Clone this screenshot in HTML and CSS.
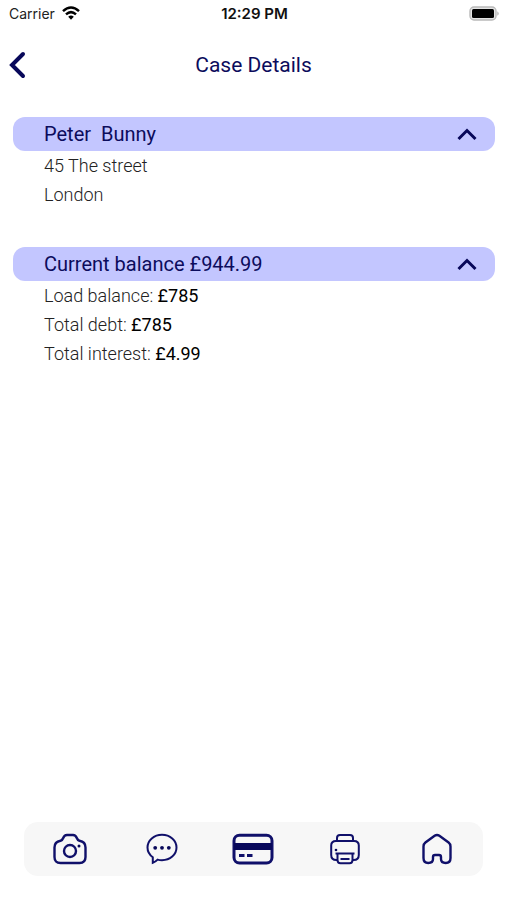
FILE: index.html
```html
<!DOCTYPE html>
<html lang="en">
<head>
  <meta charset="utf-8">
  <meta name="viewport" content="width=device-width, initial-scale=1">
  <title>Case Details</title>
  <link rel="stylesheet" href="styles.css">
</head>
<body>
  <div class="status">
    <div class="carrier">
      <span>Carrier</span>
      <svg width="18" height="14" viewBox="0 0 18 14" aria-hidden="true">
        <g fill="none" stroke="#000" stroke-width="2.5">
          <path d="M1 5.2Q9-2.2 17 5.2"/>
          <path d="M4 8.4Q9 3.9 14 8.4"/>
        </g>
        <path d="M6.2 10.7Q9 8.4 11.8 10.7L9 13.8Z"/>
      </svg>
    </div>
    <span class="time">12:29 PM</span>
    <svg class="battery" width="31" height="15" viewBox="0 0 31 15" aria-hidden="true">
      <rect x="1" y="1" width="26" height="13" rx="4" fill="#e4e4e4" stroke="#b9b9b9" stroke-width="1.4"/>
      <rect x="3" y="3" width="22" height="9" rx="1.5"/>
      <path d="M28.4 5.2Q31 7.5 28.4 9.8Z" fill="#aaa"/>
    </svg>
  </div>

  <header class="header">
    <button class="back" type="button" aria-label="Back">
      <svg width="18" height="28" viewBox="0 0 18 28" aria-hidden="true"><path d="M15 3L4 14L15 25"/></svg>
    </button>
    <h1>Case Details</h1>
  </header>

  <main class="content">
    <section>
      <button class="bar" type="button" aria-expanded="true" aria-controls="person">
        <span>Peter&nbsp; Bunny</span>
        <svg width="20" height="14" viewBox="0 0 20 14" aria-hidden="true"><path d="M1.500 12L10 3.500L18.500 12"/></svg>
      </button>
      <div class="lines" id="person">
        <p>45 The street</p>
        <p>London</p>
      </div>
    </section>
    <section>
      <button class="bar" type="button" aria-expanded="true" aria-controls="balance">
        <span>Current balance £944.99</span>
        <svg width="20" height="14" viewBox="0 0 20 14" aria-hidden="true"><path d="M1.500 12L10 3.500L18.500 12"/></svg>
      </button>
      <div class="lines" id="balance">
        <p>Load balance: <b>£785</b></p>
        <p>Total debt: <b>£785</b></p>
        <p>Total interest: <b>£4.99</b></p>
      </div>
    </section>
  </main>

  <nav class="tabs">
    <a href="#camera" aria-label="Camera">
      <svg width="34" height="32" viewBox="0 0 34 32" aria-hidden="true">
        <path d="M7.500 7.800Q9.400 7.200 10.200 5Q11.300 2 14 2H20Q22.700 2 23.800 5Q24.600 7.200 26.500 7.800Q32.500 8.800 32.500 14.500V24Q32.500 30 26.500 30H7.500Q1.500 30 1.500 24V14.500Q1.500 8.800 7.500 7.800Z"/>
        <circle cx="17" cy="18" r="6"/>
        <circle class="dot" cx="26" cy="13" r="1.500"/>
      </svg>
    </a>
    <a href="#messages" aria-label="Messages">
      <svg class="thin" width="32" height="32" viewBox="0 0 32 32" aria-hidden="true">
        <path d="M6.800 24.200C3.400 21.800 1.500 18.400 1.500 14.500C1.500 7.200 8 1.800 16 1.800S30.500 7.200 30.500 14.500S24 27.200 16 27.200C14.500 27.200 13 27 11.600 26.600C10 28.300 8.600 29.200 6.800 29.800Z"/>
        <circle class="dot" cx="9.200" cy="14.800" r="1.900"/>
        <circle class="dot" cx="16" cy="14.800" r="1.900"/>
        <circle class="dot" cx="22.800" cy="14.800" r="1.900"/>
      </svg>
    </a>
    <a href="#payments" aria-label="Payments">
      <svg class="thick" width="42" height="32" viewBox="0 0 42 32" aria-hidden="true">
        <rect x="2" y="2.200" width="38" height="27.800" rx="5.500"/>
        <path class="dot" d="M2 10H40V17H2Z"/>
        <path d="M7 22.500H12.500M15 22.500H20.500"/>
      </svg>
    </a>
    <a href="#documents" aria-label="Documents">
      <svg class="thin" width="30" height="32" viewBox="0 0 30 32" aria-hidden="true">
        <path d="M7 8V5Q7 2 10 2H20Q23 2 23 5V8"/>
        <path d="M7.500 27H6.500Q1.200 27 1.200 22V12.500Q1.200 8 6 8H24Q28.800 8 28.800 12.500V22Q28.800 27 23.500 27H22.500"/>
        <path d="M5.500 20.500H24.500M7.500 20.500V27Q7.500 30.200 10.500 30.200H19.500Q22.500 30.200 22.500 27V20.500M10.500 26H19.500"/>
        <circle class="dot" cx="6" cy="17" r="1.300"/>
      </svg>
    </a>
    <a href="#home" aria-label="Home">
      <svg width="30" height="32" viewBox="0 0 30 32" aria-hidden="true">
        <path d="M1.500 13.500Q1.500 11 3.400 9.500L12.600 2.700Q15 1.200 17.400 2.700L26.600 9.500Q28.500 11 28.500 13.500V25Q28.500 30 23.700 30Q19 30 19 26V24Q19 22 17 22H13Q11 22 11 24V26Q11 30 6.300 30Q1.500 30 1.500 25Z"/>
      </svg>
    </a>
  </nav>
</body>
</html>
```
FILE: styles.css
```css
* {
  box-sizing: border-box;
}

body {
  display: flex;
  flex-direction: column;
  min-height: 100vh;
  margin: 0;
  background: #fff;
  color: #222;
  font-family: Roboto, "Liberation Sans", sans-serif;
}

h1,
p {
  margin: 0;
}

button {
  border: 0;
  background: none;
  color: inherit;
  font: inherit;
  cursor: pointer;
}

svg {
  display: block;
}

.status {
  display: grid;
  grid-template-columns: 1fr auto 1fr;
  align-items: center;
  height: 26px;
  padding: 0 7px 0 9px;
  font-family: "Liberation Sans", sans-serif;
  font-family: Inter, "Liberation Sans", sans-serif;
  font-size: 14px;
}

.carrier {
  display: flex;
  align-items: center;
  gap: 7px;
}

.time {
  color: #111;
  font-size: 15px;
  font-weight: 600;
}

.battery {
  justify-self: end;
}

.header {
  display: grid;
  grid-template-columns: 40px 1fr 40px;
  align-items: center;
  height: 78px;
  color: #0c0c5c;
}

.header h1 {
  font-size: 21px;
  font-weight: 400;
  text-align: center;
}

.back {
  padding: 0 0 0 8px;
}

.back path,
.bar path {
  fill: none;
  stroke: #08085a;
  stroke-width: 3;
}

.back path {
  stroke-linecap: round;
  stroke-width: 4;
}

.content {
  display: flex;
  flex: 1;
  flex-direction: column;
  gap: 38px;
  padding: 13px 12px 0 13px;
}

.bar {
  display: flex;
  align-items: center;
  justify-content: space-between;
  width: 100%;
  height: 34px;
  padding: 0 18px 0 31px;
  border-radius: 12px;
  background: #c3c6ff;
  color: #0c0c5c;
  font-size: 20px;
}

.lines {
  padding-left: 31px;
  font-size: 18px;
  font-weight: 300;
  line-height: 29px;
}

.lines b {
  color: #000;
  font-weight: 400;
}

.tabs {
  display: grid;
  grid-template-columns: repeat(5, 1fr);
  height: 54px;
  margin: 0 24px 24px;
  border-radius: 14px;
  background: #f7f7f7;
}

.tabs a {
  display: grid;
  place-items: center;
}

.tabs svg {
  fill: none;
  stroke: #10106a;
  stroke-width: 2.4;
}

.tabs .thin {
  stroke-width: 2;
}

.tabs .thick {
  stroke-width: 3;
}

.tabs .dot {
  fill: #08085a;
  stroke: none;
}
```
